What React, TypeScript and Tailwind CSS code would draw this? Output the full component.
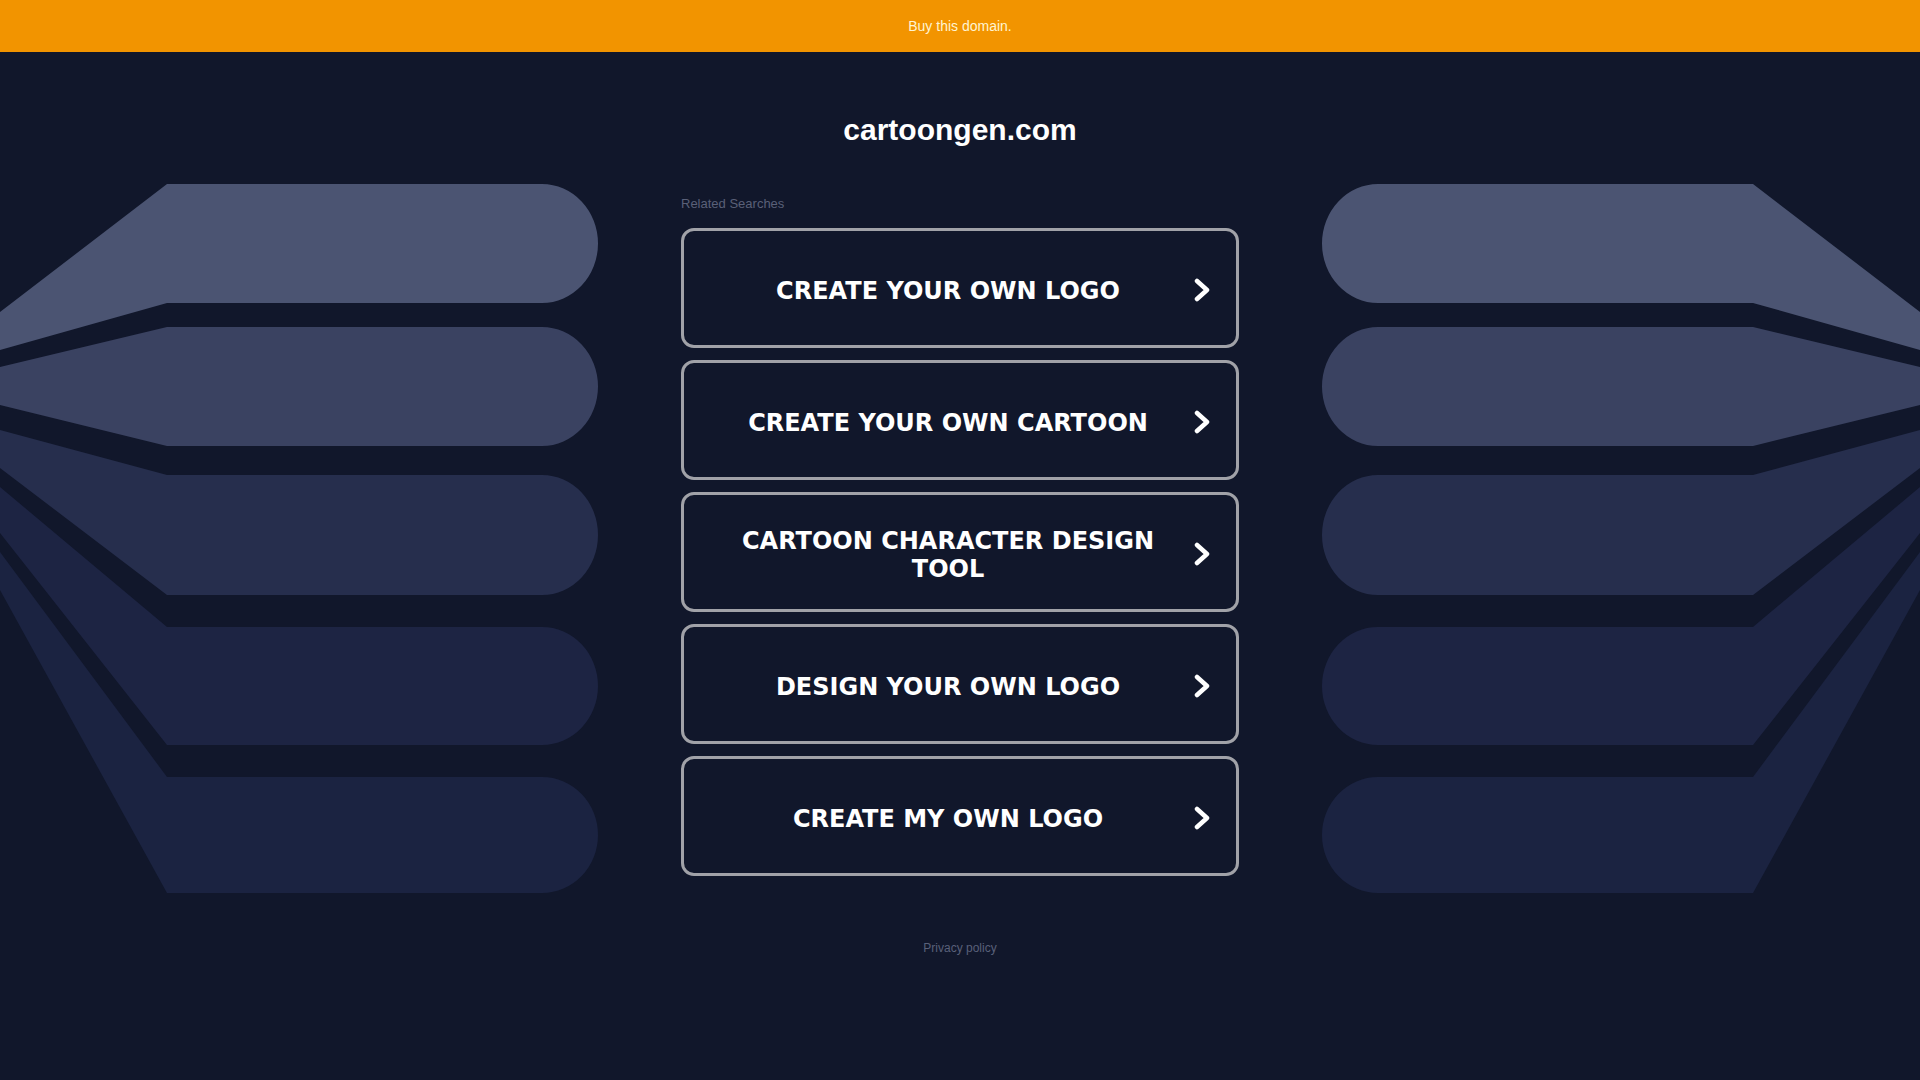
const searches = [
  "CREATE YOUR OWN LOGO",
  "CREATE YOUR OWN CARTOON",
  "CARTOON CHARACTER DESIGN TOOL",
  "DESIGN YOUR OWN LOGO",
  "CREATE MY OWN LOGO",
];

// Decorative bands on both sides. y values are relative to the row top.
// top/bottom = the flat part, tipTop/tipBottom = where the band meets the edge.
const bands = [
  { top: 4, bottom: 123, tipTop: 132, tipBottom: 170, fill: "#4b5472" },
  { top: 147, bottom: 266, tipTop: 187, tipBottom: 225, fill: "#3a4261" },
  { top: 295, bottom: 415, tipTop: 250, tipBottom: 288, fill: "#262e4d" },
  { top: 447, bottom: 565, tipTop: 307, tipBottom: 353, fill: "#1d2443" },
  { top: 597, bottom: 713, tipTop: 372, tipBottom: 410, fill: "#1b2341" },
];

const bandPath = (b: (typeof bands)[number]) => {
  const ry = (b.bottom - b.top) / 2;
  return `M0 ${b.tipTop} L167 ${b.top} H542 A56 ${ry} 0 0 1 542 ${b.bottom} H167 L0 ${b.tipBottom} Z`;
};

const Fan = ({ flip }: { flip?: boolean }) => (
  <svg
    width="681"
    height="714"
    viewBox="0 0 681 714"
    className={flip ? "shrink-0 -scale-x-100" : "shrink-0"}
  >
    {bands.map((b, i) => (
      <path key={i} d={bandPath(b)} fill={b.fill} />
    ))}
  </svg>
);

const SearchLink = ({ label }: { label: string }) => (
  <a
    href="#"
    className="flex h-[120px] items-center rounded-[13px] border-[3px] border-[#a1a2a8] pl-[40px] pr-[26px]"
  >
    <span className="flex-1 pt-[5px] text-center font-['DejaVu_Sans',sans-serif] text-[24px] font-bold leading-[28px] text-white">
      {label}
    </span>
    <svg width="16" height="24" viewBox="0 0 16 24" className="ml-[22px] mt-[4px] shrink-0">
      <polyline
        points="3,3 13,12 3,21"
        fill="none"
        stroke="#ffffff"
        strokeWidth="4.5"
        strokeLinecap="round"
        strokeLinejoin="round"
      />
    </svg>
  </a>
);

export default function App() {
  return (
    <div className="min-h-screen bg-[#11172b] font-['Liberation_Sans',Arial,sans-serif]">
      <div className="flex h-[52px] items-center justify-center bg-[#f29400]">
        <a href="#" className="text-[14px] text-[#fff4d2]">
          Buy this domain.
        </a>
      </div>

      <h1 className="mt-[60px] text-center text-[30px] font-bold leading-[36px] text-white">
        cartoongen.com
      </h1>

      <div className="mt-[32px] flex">
        <Fan />
        <div className="w-[558px] shrink-0 pt-[16px]">
          <p className="mb-[16px] text-[13px] leading-[16px] text-[#5a6078]">
            Related Searches
          </p>
          <div className="flex flex-col gap-[12px]">
            {searches.map((s) => (
              <SearchLink key={s} label={s} />
            ))}
          </div>
        </div>
        <Fan flip />
      </div>

      <p className="mt-[46px] text-center text-[12px] leading-[16px] text-[#596079]">
        Privacy policy
      </p>
    </div>
  );
}
